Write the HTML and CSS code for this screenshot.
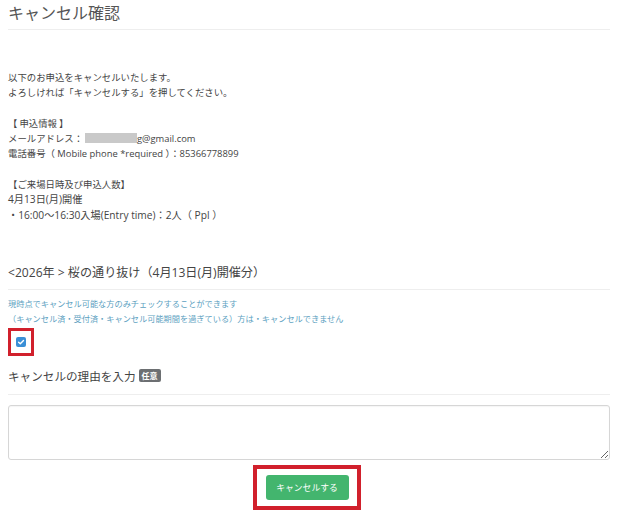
FILE: index.html
```html
<!DOCTYPE html>
<html lang="ja">
<head>
<meta charset="utf-8">
<link rel="stylesheet" href="styles.css">
</head>
<body>
<div class="page">
  <h1 class="title">キャンセル確認</h1>
  <hr class="rule">
  <div class="info">
    <p>以下のお申込をキャンセルいたします。<br>よろしければ「キャンセルする」を押してください。</p>
    <p>【 申込情報 】<br>メールアドレス：<span class="redact"></span><span class="lat">g@gmail.com</span><br>電話番号（<span class="lat"> Mobile phone *required </span>）：<span class="lat">85366778899</span></p>
    <p>【ご来場日時及び申込人数】<br><span class="big">4月13日(月)開催</span><br><span class="big">・16:00～16:30入場(Entry time)：2人（ Ppl ）</span></p>
  </div>
  <h2 class="event">&lt;2026年 &gt; 桜の通り抜け（4月13日(月)開催分）</h2>
  <hr class="rule">
  <p class="note">現時点でキャンセル可能な方のみチェックすることができます<br>（キャンセル済・受付済・キャンセル可能期間を過ぎている）方は・キャンセルできません</p>
  <div class="checkframe">
    <span class="check">
      <svg viewBox="0 0 10 10" width="10" height="10"><path d="M2.6 5.2 L4.3 6.8 L7.5 3.4" fill="none" stroke="#fff" stroke-width="1.4" stroke-linecap="round" stroke-linejoin="round"/></svg>
    </span>
  </div>
  <h3 class="reason">キャンセルの理由を入力<span class="badge">任意</span></h3>
  <hr class="rule">
  <textarea class="box"></textarea>
  <div class="actions">
    <div class="btnframe"><button class="btn">キャンセルする</button></div>
  </div>
</div>
</body>
</html>
```

FILE: styles.css
```css
* { box-sizing: border-box; }
html, body { margin: 0; padding: 0; background: #fff; }
body {
  font-family: "Open Sans", "Noto Sans CJK JP", sans-serif;
  color: #444;
}
.page { padding: 0 10px 0 8px; }
.title {
  margin: 0;
  padding-top: 2px;
  font-size: 16px;
  font-weight: 400;
  line-height: 20px;
  color: #555;
  height: 23px;
  font-family: "Noto Sans CJK JP", sans-serif;
}
.rule {
  border: 0;
  border-top: 1px solid #eee;
  margin: 0;
}
.title + .rule { margin-top: 6px; }
.info {
  margin-top: 40px;
  font-size: 9.4px;
  line-height: 15.3px;
  color: #444;
  font-family: "Noto Sans CJK JP", sans-serif;
}
.info p { margin: 0 0 15.3px; }
.info .lat, .info .big { font-family: "Open Sans", "Noto Sans CJK JP", sans-serif; }
.info .lat { font-size: 9.4px; }
.info .big { font-size: 10.2px; }
.redact {
  display: inline-block;
  width: 52px;
  height: 10px;
  background: #c9c9c9;
  vertical-align: -1px;
  margin-left: 2px;
}
.event {
  margin: 40px 0 0;
  font-size: 12.1px;
  font-weight: 400;
  line-height: 20px;
  color: #444;
  height: 26px;
}
.note {
  margin: 6px 0 0;
  font-size: 8.2px;
  line-height: 15px;
  color: #5d9fbf;
  font-family: "Noto Sans CJK JP", sans-serif;
}
.checkframe {
  margin-top: 2px;
  width: 26px;
  height: 28px;
  border: 3px solid #d1202c;
  display: flex;
  align-items: center;
  justify-content: center;
}
.check {
  width: 10px;
  height: 10px;
  border-radius: 2px;
  background: #3a8fd6;
  display: flex;
}
.reason {
  margin: 11px 0 0;
  font-size: 11.6px;
  font-weight: 400;
  line-height: 18px;
  color: #444;
  font-family: "Noto Sans CJK JP", sans-serif;
  display: flex;
  align-items: center;
  padding-bottom: 9px;
  box-sizing: content-box;
  height: 18px;
}
.badge {
  display: inline-block;
  margin-left: 3px;
  background: #6c6f72;
  color: #fff;
  font-size: 8px;
  line-height: 13px;
  padding: 0 3px;
  border-radius: 2px;
  font-weight: 700;
}
.box {
  display: block;
  margin-top: 10px;
  width: 100%;
  height: 55px;
  border: 1px solid #d6d6d6;
  border-radius: 3px;
  resize: vertical;
  box-shadow: inset 0 1px 1px rgba(0,0,0,0.04);
}
.actions {
  display: flex;
  justify-content: center;
  margin-top: 5px;
  padding-right: 4px;
}
.btnframe {
  width: 108px;
  height: 45px;
  border: 4px solid #d1202c;
  display: flex;
  align-items: center;
  justify-content: center;
}
.btn {
  width: 83px;
  height: 25px;
  background: #43b56e;
  color: #fff;
  border: 0;
  border-radius: 3px;
  font-size: 8.8px;
  font-family: "Noto Sans CJK JP", sans-serif;
  padding: 0;
}
```
